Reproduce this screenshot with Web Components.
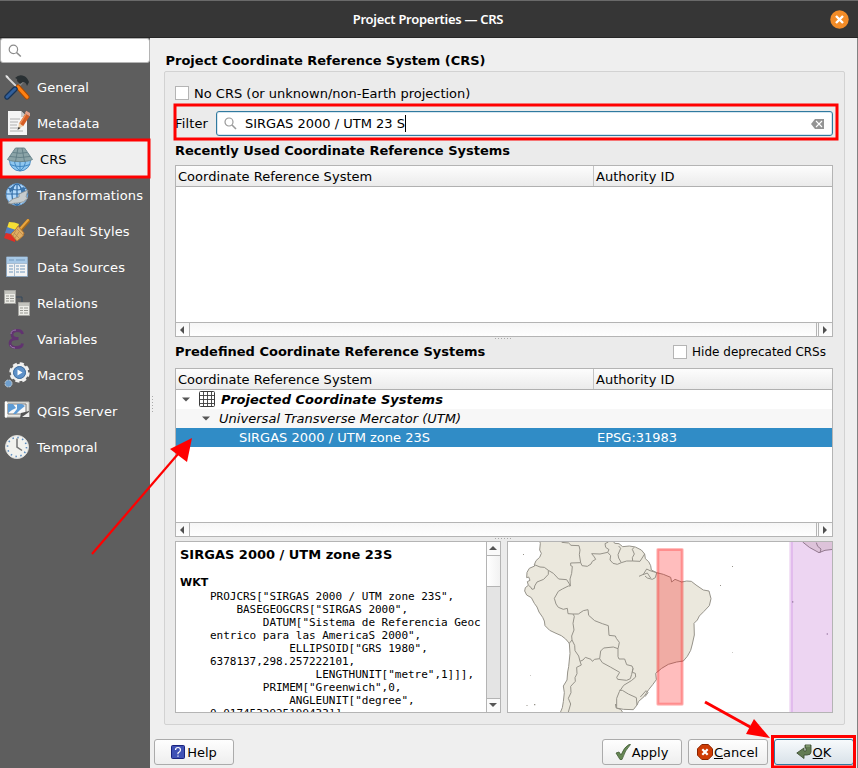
<!DOCTYPE html>
<html lang="en">
<head>
<meta charset="utf-8">
<title>Project Properties — CRS</title>
<style>
html,body{margin:0;padding:0;width:858px;height:768px;overflow:hidden;background:#efefef}
body{font:13px/16px "DejaVu Sans",sans-serif;color:#000}
</style>
</head>
<body>
<project-dialog></project-dialog>
<script>
const define = (name, html) => {
  const t = document.createElement('template');
  t.innerHTML = '<style>*{box-sizing:border-box}svg{display:block}</style>' + html;
  customElements.define(name, class extends HTMLElement {
    constructor() {
      super();
      this.attachShadow({mode: 'open'}).append(t.content.cloneNode(true));
    }
  });
};

define('title-bar', `<style>
:host{display:flex;align-items:center;justify-content:flex-end;height:38px;box-sizing:border-box;background:#363636;border-top:1px solid #6a6a6a;border-bottom:1px solid #262626;position:relative;
 font:600 13px/18px "Noto Sans",sans-serif;color:#fff;padding-right:9.5px}
span{position:absolute;left:0;width:856px;text-align:center;letter-spacing:-.28px}
</style><span><slot></slot></span>
<svg width="19" height="19" viewBox="0 0 19 19"><circle cx="9.5" cy="9.5" r="9.2" fill="#f28c28"/><path d="M6 6l7 7M13 6l-7 7" stroke="#fff" stroke-width="2.4"/></svg>`);

define('side-search', `<style>
:host{display:block;height:25px;margin:0 0 6px;background:#fff;border:1px solid #b4b4b4;border-radius:3px;box-sizing:border-box;padding:5px 0 0 7px}
</style><svg width="14" height="14" viewBox="0 0 14 14" fill="none" stroke="#8c8c8c"><circle cx="5.4" cy="5.4" r="4.2" stroke-width="1.2"/><path d="M8.5 8.5l4.3 4" stroke-width="1.6"/></svg>`);

define('side-item', `<style>
:host{display:flex;align-items:center;height:36px;box-sizing:border-box;padding-left:4px;gap:7px;color:#fff;letter-spacing:.12px}
:host([selected]){background:#efefef;color:#000;padding-left:6px}
::slotted(svg){display:block;flex:none}
span{white-space:nowrap;padding-top:1px}
</style><slot name="icon"></slot><span><slot></slot></span>`);

define('check-box', `<style>
:host{display:flex;align-items:center;gap:5px}
i{width:14px;height:14px;border:1px solid #b4b4b4;background:#fff;flex:none}
span{white-space:nowrap;padding-top:var(--label-drop,2px)}
</style><i></i><span><slot></slot></span>`);

define('filter-field', `<style>
:host{display:flex;align-items:center;height:31px}
label{width:41px;letter-spacing:.15px}
div{flex:1;display:flex;align-items:center;height:25px;border:1px solid #307a9f;border-radius:3px;background:#fff;padding:0 7px 0 7px;box-shadow:inset 0 0 0 1px #d6e6f0}
b{font-weight:400;margin-left:8px;white-space:nowrap}
u{width:1px;height:17px;background:#000}
.c{margin-left:auto}
</style><label>Filter</label><div>
<svg width="13" height="13" viewBox="0 0 13 13" fill="none" stroke="#999"><circle cx="5" cy="5" r="4" stroke-width="1.2"/><path d="M8 8l4 4" stroke-width="1.6"/></svg>
<b><slot></slot></b><u></u>
<svg class="c" width="14" height="10" viewBox="0 0 14 10"><path d="M4 0h9v10H4L0 5z" fill="#949494"/><path d="M5 2l6 6M11 2l-6 6" stroke="#fff" stroke-width="1.1"/></svg></div>`);

define('h-scroll', `<style>
:host{display:flex;height:14px;box-sizing:border-box;border-top:1px solid #b4b4b4;background:linear-gradient(#f6f6f6,#fefefe)}
i{width:14px;display:grid;place-items:center;border-right:1px solid #b4b4b4;padding-right:1px}
b{flex:1;border-right:1px solid #b4b4b4;margin-right:1px}
i.r{border:0;border-left:1px solid #b4b4b4;padding-right:2px}
</style><i><svg width="4" height="8"><path d="M4 0v8L0 4z" fill="#505050"/></svg></i><b></b><i class="r"><svg width="4" height="8"><path d="M0 0v8l4-4z" fill="#505050"/></svg></i>`);

define('crs-table', `<style>
:host{display:flex;flex-direction:column;border:1px solid #b4b4b4;box-sizing:border-box;background:#fff}
header{display:flex;height:21px;border-bottom:1px solid #b0b0b0;background:linear-gradient(#fdfdfd,#ebebeb);line-height:20px}
header span{padding:1px 0 0 2px;letter-spacing:.03px}
header span:first-child{width:418px;border-right:1px solid #c4c4c4}
section{flex:1}
</style><header><span>Coordinate Reference System</span><span>Authority ID</span></header><section><slot></slot></section><h-scroll></h-scroll>`);

define('crs-row', `<style>
:host{display:flex;align-items:center;height:19px}
:host([alt]){background:#f7f7f7;font-style:italic;letter-spacing:.03px}
:host([group]){font-weight:700;font-style:italic;letter-spacing:.02px}
:host([selected]){background:#308cc6;color:#fff}
svg{flex:none}
span{white-space:nowrap;padding-top:1px}
.a,.g{display:none}
:host([group]) .a{display:block;margin-left:6px}
:host([group]) .g{display:block;margin:-2px 6px 0 9px}
:host([alt]) .a{display:block;margin:0 9px 0 26px}
:host([selected]) .t{margin-left:63px;width:358px}
</style><svg class="a" width="8" height="5"><path d="M0 .5h8L4 4.5z" fill="#555"/></svg>
<svg class="g" width="16" height="16" fill="none" stroke="#3c3c3c"><rect x=".5" y=".5" width="15" height="15" rx="1"/><path d="M4.500 0v16M8.500 0v16M12.500 0v16M0 4.500h16M0 8.500h16M0 12.500h16" stroke-width=".9"/></svg>
<span class="t"><slot></slot></span><span><slot name="id"></slot></span>`);

define('wkt-view', `<style>
:host{display:flex;width:326px;height:172px;box-sizing:border-box;border:1px solid #b4b4b4;background:#fff;overflow:hidden}
.t{flex:1;overflow:hidden;padding:5px 0 0 4px}
h3{font-size:13px;line-height:16px;margin:0}
h4{font-size:11px;line-height:13px;margin:13px 0 1px}
pre{margin:0 0 0 30px;font:11px/13px "DejaVu Sans Mono",monospace;letter-spacing:-.022px}
aside{width:14px;border-left:1px solid #b4b4b4;display:flex;flex-direction:column;background:#e4e4e4}
aside i{display:grid;place-items:center;height:14px;background:#fafafa;border-bottom:1px solid #b4b4b4;padding:0 1px 1px 0}
aside b{height:31px;background:linear-gradient(90deg,#fff,#f2f2f2);border-bottom:1px solid #b4b4b4}
aside i:last-child{margin-top:auto;border:0;border-top:1px solid #b4b4b4}
</style><div class="t"><h3>SIRGAS 2000 / UTM zone 23S</h3><h4>WKT</h4><pre>PROJCRS["SIRGAS 2000 / UTM zone 23S",
    BASEGEOGCRS["SIRGAS 2000",
        DATUM["Sistema de Referencia Geoc
entrico para las AmericaS 2000",
            ELLIPSOID["GRS 1980",
6378137,298.257222101,
                LENGTHUNIT["metre",1]]],
        PRIMEM["Greenwich",0,
            ANGLEUNIT["degree",
0.0174532925199433]],</pre></div>
<aside><i><svg width="8" height="4"><path d="M0 4h8L4 0z" fill="#555"/></svg></i><b></b><i><svg width="8" height="4"><path d="M0 0h8L4 4z" fill="#555"/></svg></i></aside>`);

define('extent-map', `<style>
:host{display:block;width:326px;height:172px;box-sizing:border-box;border:1px solid #b4b4b4;background:#fff;overflow:hidden}
</style><svg width="324" height="170" viewBox="24 96 972 510">
<g fill="#ebe8dd" stroke="#96938a" stroke-width="3" stroke-linejoin="round">
<path d="M118 90L121 100 119 120 124 130 119 142 108 152 103 164 104 168 88 175 81 187 80 203 86 201 90 211 82 215 85 226 76 233 74 243 80 255 94 263 103 280 111 291 117 306 128 322 133 333 135 347 149 361 168 370 184 377 197 387 208 400 210 430 206 470 203 486 201 510 190 528 193 548 190 575 187 593 180 610H370L362 598 349 594 347 582 349 594 370 598 400 599 411 585 416 574 432 560 446 539 458 524 469 509 467 490 485 475 505 463 530 456 550 453 562 439 572 421 577 402 583 375 582 340 592 330 598 318 612 304 628 287 633 266 627 243 610 240 588 225 574 214 560 213 545 216 525 208 515 216 512 202 490 193 470 188 454 180 452 167 446 155 436 146 434 132 424 120 406 111 388 108 368 110 357 101 344 100 338 90Z"/>
<g fill="none">
<path d="M103 164L120 171 133 172 145 181 160 190 176 207 200 209 207 220 211 228 205 228 187 237 175 244 163 265 168 282 175 292 190 298 202 295 204 311 219 312 223 319 219 340 222 360 215 378 216 390 207 401M145 181L145 193 131 208 111 216 104 228 103 236 96 238 91 230 86 227M185 97L206 99 213 106 237 107 240 120 238 134 242 158 212 159 212 167 217 169 215 190 210 207 211 228M242 158L246 167 262 169 273 162 277 154 287 148 283 141 275 131 300 132 323 127 327 119 317 112 315 101 325 96M323 127L332 137 330 150 339 160 352 163 364 158 356 144 354 134 362 115 356 108M364 158L380 153 398 153 397 143 403 132 397 118 402 112M398 153L420 154 434 132M219 312L235 312 250 302 264 299 266 316 284 332 307 341 325 347 327 376 346 378 349 385 358 397 356 408 354 416 354 440 357 447 374 447 380 464 396 468 399 475 395 493 391 506 380 511 353 508 350 502 359 487 331 471 307 458 299 446 302 423 311 414 340 411 354 416M216 390L224 406 225 422 236 438 240 454 249 450 256 442 273 448 277 454 284 448 299 446M240 454L244 465 230 472 231 491 225 503 226 514 212 529 213 548 205 565 212 582 205 606M399 475L397 487 406 490 407 501 394 512 371 526 358 545 350 565 350 590M358 541L367 541 385 552 409 563 411 585"/>
<path d="M417 199L430 193 440 177 450 182 470 188 466 203 457 208 442 204 435 198M429 194L442 189 452 204M421 561L438 542 444 548 435 560"/>
</g></g>
<g fill="#96938a"><path d="M69 132h3v3h-3zM102 582h4v4h-4zM79 585h4v2h-4zM660 225h3v3h-3zM696 168h3v3h-3zM696 426h2v2h-2zM90 495h2v2h-2z"/></g>
<path d="M868 90H1000V610H868z" fill="#edd5f2"/><path d="M876 90V610" stroke="#dcaeea" stroke-width="4"/>
<path d="M908 96L928 112 957 128 975 121 1000 118V90H908z" fill="#ddc3da"/><path d="M908 96L928 112 957 128 975 121 1000 118M949 98L953 109 963 117 960 128" fill="none" stroke="#92798f" stroke-width="3"/>
<path d="M876 273h4v5h-4zM980 370h4v4h-4z" fill="#a889b1"/>
<rect x="469" y="114" width="82" height="473" rx="5" fill="#ff0000" fill-opacity=".26"/><rect x="475" y="120" width="70" height="461" fill="none" stroke="#ff0000" stroke-opacity=".25" stroke-width="6"/>
</svg>`);

define('dialog-button', `<style>
:host{display:flex;align-items:center;justify-content:center;gap:1px;width:80px;height:26px;box-sizing:border-box;border:1px solid #ababab;border-radius:3px;background:linear-gradient(#fefefe,#eee);white-space:nowrap;padding-right:1px}
:host([default]){border-color:#307a9f;background:linear-gradient(#f7fafc,#d9e2e9)}
::slotted(svg){display:block;flex:none}
span{padding-top:1px}
</style><slot name="icon"></slot><span><slot></slot></span>`);

define('dotted-grip', `<style>
:host{display:flex;justify-content:center;align-items:center;width:100%;height:4px}
i{width:18px;height:1px;background:repeating-linear-gradient(90deg,#aaa 0 1px,transparent 1px 3px)}
</style><i></i>`);

define('mark-overlay', `<style>
:host{position:absolute;inset:0;pointer-events:none}
</style><svg width="858" height="768" fill="none" stroke="#f00">
<rect x="1" y="140" width="148" height="37" stroke-width="3"/>
<rect x="175" y="105" width="662" height="34" stroke-width="3"/>
<rect x="772.5" y="736.5" width="82" height="30.5" stroke-width="3"/>
<path d="M92 554L178 454" stroke-width="2.2"/><path d="M192 438L187 462 170 449z" fill="#f00" stroke="none"/>
<path d="M705 702L752 728" stroke-width="3"/><path d="M770 738L746 734 754 719z" fill="#f00" stroke="none"/>
</svg>`);

define('project-dialog', `<style>
:host{display:flex;flex-direction:column;position:relative;width:858px;height:768px;background:#efefef;overflow:hidden}
.body{display:flex;flex:1;min-height:0}
nav{width:150px;background:#5e5e5e;flex:none}
main{flex:1;display:flex;flex-direction:column;padding:14px 12px 0 4px;border-right:1px solid #828282}
h1,h2{font-size:13px;line-height:16px;margin:0;font-weight:700;white-space:nowrap}
h1{margin:1px 0 2px 11.5px}
.grip{width:5px;height:18px;position:absolute;left:150px;top:396px;background:repeating-linear-gradient(#aaa 0 1px,transparent 1px 3px) 2px 0/1px 100% no-repeat}
.box{margin-left:10px;height:654px;border:1px solid #d2d2d2;border-radius:2px;background:#ebebeb;padding:6px 11px 0 10px;display:flex;flex-direction:column}
.box>check-box{height:30px}
.box h2{height:26px;padding-top:4px}
.mid{height:31px;display:flex;justify-content:space-between;align-items:center;position:relative;padding-bottom:2px}
.mid h2{height:auto;padding:0}
.mid check-box{height:auto;font-size:12px;padding-right:7px;--label-drop:0px}
.mid dotted-grip{position:absolute;top:-1px;left:0}
.t1{height:172px}.t2{height:169px}
.low{padding-bottom:2px;box-sizing:border-box}
.bottom{display:flex;justify-content:space-between}
footer{display:flex;gap:6px;margin-top:14px;margin-right:-9px}
footer dialog-button:first-child{margin-right:auto}
</style>
<title-bar>Project Properties — CRS</title-bar>
<div class="body">
<nav><side-search></side-search>
<side-item>General<svg slot="icon" width="26" height="26" viewBox="0 0 26 26"><path d="M2 2l13 13" stroke="#d8d8d8" stroke-width="1.8"/><path d="M1 1l3 1 1 3z" fill="#eee"/><path d="M13 14L19 7" stroke="#888" stroke-width="2.5"/><path d="M11 4q4-4 9-2 3 1 5 6l-2 4q-1-4-4-4l-3 2-3-3q1-2-2-3z" fill="#293033"/><path d="M14 13l9 10" stroke="#a84800" stroke-width="5" stroke-linecap="round"/><path d="M14 13l9 10" stroke="#ff8113" stroke-width="3.2" stroke-linecap="round"/><path d="M11 15l-8 8" stroke="#173457" stroke-width="5.4" stroke-linecap="round"/><path d="M11 15l-8 8" stroke="#315f9c" stroke-width="3" stroke-linecap="round"/></svg></side-item>
<side-item>Metadata<svg slot="icon" width="26" height="26" viewBox="0 0 26 26"><path d="M4 1h13l6 6v18H4z" fill="#f5f5f5"/><path d="M17 1v6h6z" fill="#c9c9c9"/><path d="M6 9h10M6 12h8M6 15h7M6 18h9M6 21h13" stroke="#b0b0b0"/><path d="M23.5 5L17 15" stroke="#d65d24" stroke-width="5"/><path d="M22 4L15.500 14.500" stroke="#ef9158" stroke-width="1.4"/><path d="M15 13l4 3-5 3.500z" fill="#eed0aa"/><path d="M14.500 17l-1 3 3-2z" fill="#333"/><path d="M21.5 2l5 3" stroke="#e4a18a" stroke-width="3"/></svg></side-item>
<side-item selected>CRS<svg slot="icon" width="27" height="26" viewBox="0 0 27 26"><circle cx="14" cy="14.500" r="10.500" fill="#8ec6ef" stroke="#4a8cc6"/><path d="M14 14v11M8.500 14q0 7 5.500 11 5.500-4 5.500-11M4 18.500q10 4 20 0" fill="none" stroke="#3f86c2"/><path d="M9.500 2h9l8 11.500q-3 1.500-6 1.700-6.500 1-13 0-3-.2-6-1.700z" fill="#8ba4a8" stroke="#6c8890"/><path d="M12 2L9.500 15.500M16 2l2.500 13.500M7 6.500q7 1.500 14 0M4 10.500q10 2 20 0" fill="none" stroke="#5c7982" stroke-width=".8"/></svg></side-item>
<side-item>Transformations<svg slot="icon" width="26" height="26" viewBox="0 0 26 26"><circle cx="13" cy="12.500" r="10.800" fill="#b4dafb" stroke="#6ba4da"/><ellipse cx="13" cy="12.500" rx="5" ry="10.500" fill="none" stroke="#2f6ba5" stroke-width="1.200"/><path d="M2 12h22M4 6q9 4 18 0M13 2v22" fill="none" stroke="#2f6ba5" stroke-width="1.200"/><path d="M5 7l5-4 0 3-4 5zM16 6l4-1 2 5-4 0z" fill="#3d75ab"/><path d="M4 21q4-5 11-6l0-3 9-4-2 7 2 1q-4 5-10 5-5 0-7 1z" fill="#c7cccd" stroke="#858b8e" stroke-width=".8"/></svg></side-item>
<side-item>Default Styles<svg slot="icon" width="26" height="26" viewBox="0 0 26 26"><path d="M5 4q6 0 10 2l-3 8-9-4z" fill="#f6df35"/><path d="M3 9l9 3-3 7-8-4z" fill="#527fc0"/><path d="M2 15l10 2-1 7-11-4z" fill="#e12d25"/><path d="M24 3l-8 9" stroke="#a86918" stroke-width="4" stroke-linecap="round"/><path d="M24 2l-8 9" stroke="#e9a640" stroke-width="2" stroke-linecap="round"/><path d="M14 8l6 7-1 3-6 5-6-7 5-5z" fill="#dfad62" stroke="#b97a33"/><path d="M13 11l6 6M10 15l5 5M12 12l-3 6M15 14l-4 6" stroke="#b9874a" stroke-width=".8"/></svg></side-item>
<side-item>Data Sources<svg slot="icon" width="26" height="26" viewBox="0 0 26 26"><path d="M2.500 3h21v19.500h-21z" fill="#f3f3f3" stroke="#8ba5be"/><path d="M3 3h20v6H3z" fill="#a7c8e6"/><path d="M5 6h5M12 6h9M5 12h4M5 15h4M5 18h4M12 12h3M16 12h5M12 15h3M16 15h5M12 18h3M16 18h5" stroke="#7198bd"/><path d="M10.500 9v13M3 9.500h20" stroke="#a9bdd1"/></svg></side-item>
<side-item>Relations<svg slot="icon" width="26" height="26" viewBox="0 0 26 26"><path d="M12 7h6v6" fill="none" stroke="#34495d"/><path d="M.5.500h11v13H.500zM14.500 12.500h11v13h-11z" fill="#ecece7" stroke="#a4a4a0"/><path d="M1 1h10v3H1zM15 13h10v3H15z" fill="#c3c3bd"/><path d="M2 6h3M6 6h4M2 8.500h3M6 8.500h4M2 11h3M6 11h4M16 18h3M20 18h4M16 20.500h3M20 20.500h4M16 23h3M20 23h4" stroke="#989892"/></svg></side-item>
<side-item>Variables<svg slot="icon" width="26" height="26" viewBox="0 0 26 26"><path d="M18.500 8Q18 4.500 13.500 4.500 8 4.500 8 8.500q0 4 6.500 4Q6 12.500 6 17q0 4.500 6.500 4.500 5.500 0 6-4" fill="none" stroke="#613370" stroke-width="2.800"/><path d="M7 8q0-4 5-4M6 19q1 3 5 3" fill="none" stroke="#9b76ab" stroke-width="1"/></svg></side-item>
<side-item>Macros<svg slot="icon" width="26" height="26" viewBox="0 0 26 26"><circle cx="15.500" cy="10.500" r="8.700" fill="none" stroke="#f0f0ef" stroke-width="3" stroke-dasharray="4 2.830"/><circle cx="15.500" cy="10.500" r="7.500" fill="#5d91c9" stroke="#f0f0ef" stroke-width="2.500"/><circle cx="15.500" cy="10.500" r="6" fill="#5d91c9" stroke="#416e9d"/><path d="M13.500 7.500v6l5-3z" fill="#fff"/><circle cx="4.500" cy="21.500" r="3.500" fill="#6f9fce" stroke="#c2ccd4" stroke-dasharray="2 .75"/></svg></side-item>
<side-item>QGIS Server<svg slot="icon" width="26" height="26" viewBox="0 0 26 26"><path d="M1 4h24v15H1z" fill="#e8e8e4" stroke="#bdbdb8"/><path d="M4 6h18v10H4z" fill="#f8f8f8" stroke="#777"/><path d="M4 6h5l3 4-4 2-4 3zM13 6h5l3 2-5 4-4 4H9l4-5z" fill="#5e9cd5"/><path d="M25 13l-8 2-1 5h9z" fill="#555"/><path d="M25 14v5h-7z" fill="#eee"/><path d="M1 3.500h2v16H1z" fill="#fff"/></svg></side-item>
<side-item>Temporal<svg slot="icon" width="26" height="26" viewBox="0 0 26 26"><circle cx="13" cy="13" r="11.500" fill="#f2f2ee" stroke="#dededb"/><circle cx="13" cy="13" r="9.500" fill="none" stroke="#5d8dc0" stroke-width="1.600" stroke-dasharray="1.500 3.474"/><path d="M13 4.500V13l5 3.500" fill="none" stroke="#747474" stroke-width="1.500"/></svg></side-item>
</nav>
<main><h1>Project Coordinate Reference System (CRS)</h1>
<div class="box">
<check-box>No CRS (or unknown/non-Earth projection)</check-box>
<filter-field>SIRGAS 2000 / UTM 23 S</filter-field>
<h2>Recently Used Coordinate Reference Systems</h2>
<crs-table class="t1"></crs-table>
<div class="mid"><dotted-grip></dotted-grip><h2>Predefined Coordinate Reference Systems</h2><check-box>Hide deprecated CRSs</check-box></div>
<crs-table class="t2">
<crs-row group>Projected Coordinate Systems</crs-row>
<crs-row alt>Universal Transverse Mercator (UTM)</crs-row>
<crs-row selected>SIRGAS 2000 / UTM zone 23S<span slot="id">EPSG:31983</span></crs-row>
</crs-table>
<dotted-grip class="low"></dotted-grip>
<div class="bottom"><wkt-view></wkt-view><extent-map></extent-map></div>
</div>
<footer>
<dialog-button>Help<svg slot="icon" width="16" height="16" viewBox="0 0 16 16"><rect x="1.500" y="1.500" width="13" height="13" rx="1" fill="#3f51b5" stroke="#1a237e"/><path d="M5.500 6q0-2.500 2.500-2.500T10.500 6q0 1.500-2.500 3v1.200M8 11.500v1.300" fill="none" stroke="#fff" stroke-width="1.200"/></svg></dialog-button>
<dialog-button>Apply<svg slot="icon" width="16" height="16" viewBox="0 0 16 16"><path d="M1 9l3-1 2 3Q9 3 14 .500h1.500Q10 6 7 15.500H5z" fill="#668753" stroke="#405b35" stroke-width=".8"/></svg></dialog-button>
<dialog-button><u>C</u>ancel<svg slot="icon" width="16" height="16" viewBox="0 0 16 16"><path d="M4.800.500h6.400l4.300 4.300v6.400l-4.300 4.300H4.800L.500 11.200V4.800z" fill="#ce3b04" stroke="#8a2500"/><path d="M5.300 5.300l5.400 5.400M10.700 5.300l-5.400 5.400" stroke="#fff" stroke-width="2.200"/></svg></dialog-button>
<dialog-button default><u>O</u>K<svg slot="icon" width="16" height="16" viewBox="0 0 16 16"><path d="M9 1h6v7q0 3-4 3H8v3.500L.800 9 8 4v3h2V4H9z" fill="#637c53" stroke="#405034" stroke-width=".9"/><path d="M10 2h4" stroke="#9bb488"/></svg></dialog-button>
</footer></main>
</div>
<div class="grip"></div>
<mark-overlay></mark-overlay>`);
</script>
</body>
</html>
